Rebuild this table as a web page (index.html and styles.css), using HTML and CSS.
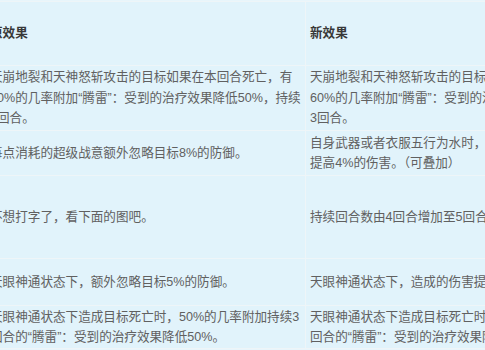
FILE: index.html
```html
<!DOCTYPE html>
<html lang="zh-CN">
<head>
<meta charset="utf-8">
<title>效果对比</title>
<link rel="stylesheet" href="styles.css">
</head>
<body>
<table class="cmp">
  <colgroup><col class="c-old"><col class="c-new"></colgroup>
  <tr class="r-head">
    <th>原效果</th>
    <th>新效果</th>
  </tr>
  <tr class="r1">
    <td>天崩地裂和天神怒斩攻击的目标如果在本回合死亡，有<br>50%的几率附加“腾雷”：受到的治疗效果降低50%，持续<br>3回合。</td>
    <td>天崩地裂和天神怒斩攻击的目标如果在本回合死亡，有<br>60%的几率附加“腾雷”：受到的治疗效果降低50%，持续<br>3回合。</td>
  </tr>
  <tr class="r2">
    <td>每点消耗的超级战意额外忽略目标8%的防御。</td>
    <td>自身武器或者衣服五行为水时，每点消耗的超级战意额外<br>提高4%的伤害。（可叠加）</td>
  </tr>
  <tr class="r3">
    <td>不想打字了，看下面的图吧。</td>
    <td>持续回合数由4回合增加至5回合。</td>
  </tr>
  <tr class="r4">
    <td>天眼神通状态下，额外忽略目标5%的防御。</td>
    <td>天眼神通状态下，造成的伤害提高5%。</td>
  </tr>
  <tr class="r5">
    <td>天眼神通状态下造成目标死亡时，50%的几率附加持续3<br>回合的“腾雷”：受到的治疗效果降低50%。</td>
    <td>天眼神通状态下造成目标死亡时，60%的几率附加持续3<br>回合的“腾雷”：受到的治疗效果降低50%。</td>
  </tr>
</table>
</body>
</html>
```

FILE: styles.css
```css
html, body {
  margin: 0;
  padding: 0;
  overflow: hidden;
  background: #e8f5fb;
}

.cmp {
  border-collapse: collapse;
  table-layout: fixed;
  width: 640px;
  margin-left: -15px;
  margin-top: 1px;
  background: #e1f3fb;
  font-family: "Liberation Sans", "Noto Sans CJK SC", sans-serif;
  font-size: 12.6px;
  line-height: 20.5px;
  color: #606060;
}

.c-old, .c-new { width: 320px; }

.cmp th,
.cmp td {
  border: 1px solid #eef5f8;
  padding: 0 4px;
  text-align: left;
  vertical-align: middle;
  white-space: nowrap;
  overflow: hidden;
}

.cmp th {
  font-weight: bold;
  color: #383838;
}

.r-head th { height: 63px; }
.r1 td { height: 64px; }
.r2 td { height: 44px; }
.r3 td { height: 82px; }
.r4 td { height: 46px; }
.r5 td { height: 42px; }
```
